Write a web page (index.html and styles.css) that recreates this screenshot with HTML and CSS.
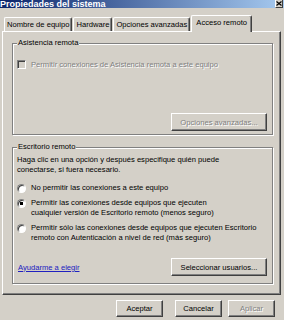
FILE: index.html
```html
<!DOCTYPE html>
<html lang="es">
<head>
    <meta charset="UTF-8">
    <meta name="viewport" content="width=device-width, initial-scale=1.0">
    <title>Propiedades del sistema</title>
    <link rel="stylesheet" href="styles.css">
</head>
<body>

<div class="window">
    <div class="titlebar">
        <span class="title">Propiedades del sistema</span>
        <span class="close">
            <svg width="6" height="5" viewBox="0 0 6 5"><path d="M0.5 0.5 L5.5 4.5 M5.5 0.5 L0.5 4.5" stroke="#000" stroke-width="1.2"/></svg>
        </span>
    </div>

    <div class="tabs">
        <span class="tab">Nombre de equipo</span>
        <span class="tab">Hardware</span>
        <span class="tab">Opciones avanzadas</span>
        <span class="tab active">Acceso remoto</span>
    </div>

    <div class="panel">
        <fieldset class="group assist">
            <legend>Asistencia remota</legend>
            <label class="option disabled"><span class="checkbox"></span><span>Permitir conexiones de Asistencia remota a este equipo</span></label>
            <div class="group-actions">
                <button class="btn wide" disabled>Opciones avanzadas...</button>
            </div>
        </fieldset>

        <fieldset class="group desktop">
            <legend>Escritorio remoto</legend>
            <p class="intro">Haga clic en una opción y después especifique quién puede<br>conectarse, si fuera necesario.</p>
            <label class="option first"><span class="radio"></span><span>No permitir las conexiones a este equipo</span></label>
            <label class="option"><span class="radio checked"></span><span>Permitir las conexiones desde equipos que ejecuten<br>cualquier versión de Escritorio remoto (menos seguro)</span></label>
            <label class="option"><span class="radio"></span><span>Permitir sólo las conexiones desde equipos que ejecuten Escritorio<br>remoto con Autenticación a nivel de red (más seguro)</span></label>
            <div class="group-actions split">
                <a href="#" class="help">Ayudarme a elegir</a>
                <button class="btn wide">Seleccionar usuarios...</button>
            </div>
        </fieldset>
    </div>

    <div class="footer">
        <button class="btn ok">Aceptar</button>
        <button class="btn">Cancelar</button>
        <button class="btn" disabled>Aplicar</button>
    </div>
</div>

</body>
</html>
```

FILE: styles.css
```css
body {
    margin: 0;
    background: #d4d0c8;
    font-family: "Liberation Sans", Arial, sans-serif;
    font-size: 7.6px;
    color: #000;
}
.window {
    width: 284px;
    height: 320px;
    overflow: hidden;
}
.titlebar {
    height: 8px;
    overflow: hidden;
    display: flex;
    justify-content: space-between;
    background: linear-gradient(to right, #0a246a, #a6caf0);
}
.title {
    color: #fff;
    font-weight: bold;
    font-size: 9px;
    line-height: 8px;
    white-space: nowrap;
}
.close {
    width: 8px;
    height: 8px;
    margin-right: 1px;
    box-sizing: border-box;
    background: #d4d0c8;
    border-right: 1px solid #404040;
    border-bottom: 1px solid #404040;
    border-left: 1px solid #fff;
    display: flex;
    align-items: center;
    justify-content: center;
}
.tabs {
    margin-top: 7px;
    height: 16px;
    display: flex;
    align-items: flex-end;
    padding-left: 4px;
}
.tab {
    height: 14px;
    box-sizing: border-box;
    padding: 0 2px;
    line-height: 13px;
    white-space: nowrap;
    border-top: 1px solid #fff;
    border-left: 1px solid #fff;
    border-right: 1px solid #404040;
    border-radius: 2px 2px 0 0;
    box-shadow: inset -1px 0 #808080;
    margin-right: 1px;
}
.tab.active {
    height: 17px;
    margin-bottom: -1px;
    padding: 0 4px 2px;
    position: relative;
    z-index: 1;
    background: #d4d0c8;
}
.panel {
    margin-left: 2px;
    width: 279px;
    height: 264px;
    box-sizing: border-box;
    border: 1px solid;
    border-color: #fff #404040 #404040 #fff;
    box-shadow: inset -1px -1px #808080;
    padding: 6px 0 0 9px;
}
.group {
    width: 261px;
    box-sizing: border-box;
    margin: 0;
    border: 1px solid #808080;
    box-shadow: inset 1px 1px #fff, 1px 1px #fff;
    padding: 12px 5px 3px 4px;
}
.group legend {
    padding: 0 1px;
    line-height: 10px;
    background: #d4d0c8;
}
.desktop {
    margin-top: 7px;
    padding-top: 3px;
    padding-bottom: 7px;
}
.option {
    display: flex;
    align-items: flex-start;
    gap: 5px;
    line-height: 10px;
    white-space: nowrap;
    margin-top: 5px;
}
.option.first {
    margin-top: 8px;
}
.assist .option {
    margin-top: 0;
}
.disabled {
    color: #808080;
    text-shadow: 1px 1px #fff;
}
.checkbox {
    width: 9px;
    height: 9px;
    box-sizing: border-box;
    border: 1px solid;
    border-color: #808080 #fff #fff #808080;
    box-shadow: inset 1px 1px #404040;
    background: #d4d0c8;
}
.radio {
    width: 9px;
    height: 9px;
    margin-top: 1px;
    box-sizing: border-box;
    border-radius: 50%;
    border: 1px solid;
    border-color: #808080 #fff #fff #808080;
    box-shadow: inset 1px 1px #404040;
    background: #fff;
}
.radio.checked {
    background: radial-gradient(circle, #000 1.5px, #fff 2px);
}
.intro {
    margin: 0;
    line-height: 10px;
    white-space: nowrap;
}
.group-actions {
    display: flex;
    justify-content: flex-end;
    align-items: center;
    margin-top: 43px;
}
.group-actions.split {
    justify-content: space-between;
    margin-top: 15px;
}
.help {
    color: #2020c0;
    text-decoration: underline;
    margin-left: 1px;
}
.btn {
    height: 18px;
    width: 47px;
    padding: 0;
    font-family: inherit;
    font-size: 7.6px;
    color: #000;
    background: #d4d0c8;
    border: 1px solid;
    border-color: #fff #404040 #404040 #fff;
    box-shadow: inset -1px -1px #808080;
    border-radius: 0;
}
.btn.wide {
    width: 96px;
}
.btn:disabled {
    color: #808080;
    text-shadow: 1px 1px #fff;
}
.footer {
    margin-top: 5px;
    display: flex;
    justify-content: flex-end;
    gap: 6px;
    padding-right: 9px;
}
.footer .btn {
    height: 17px;
}
.footer .ok {
    margin-right: 6px;
}
```
